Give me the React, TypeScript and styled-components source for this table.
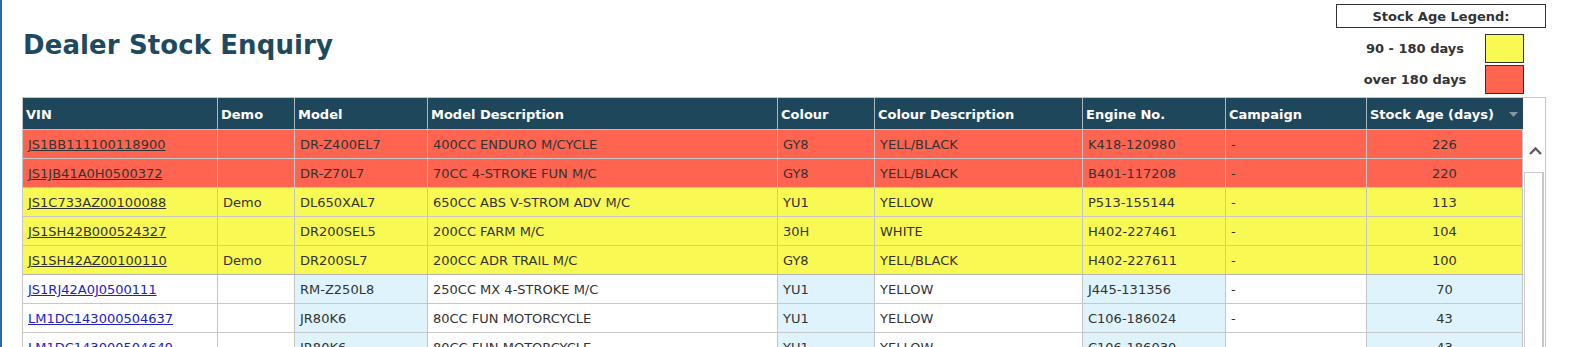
import React from "react";
import styled, { createGlobalStyle, css } from "styled-components";

const GlobalStyle = createGlobalStyle`
  html, body {
    margin: 0;
    padding: 0;
    overflow: hidden;
    background: #ffffff;
  }
  body {
    font-family: "DejaVu Sans", Verdana, sans-serif;
    color: #333333;
  }
`;

type Tone = "red" | "yellow" | "none";

interface StockRow {
  vin: string;
  demo: string;
  model: string;
  desc: string;
  colour: string;
  colourDesc: string;
  engine: string;
  campaign: string;
  age: number;
  tone: Tone;
}

const rows: StockRow[] = [
  { vin: "JS1BB111100118900", demo: "", model: "DR-Z400EL7", desc: "400CC ENDURO M/CYCLE", colour: "GY8", colourDesc: "YELL/BLACK", engine: "K418-120980", campaign: "-", age: 226, tone: "red" },
  { vin: "JS1JB41A0H0500372", demo: "", model: "DR-Z70L7", desc: "70CC 4-STROKE FUN M/C", colour: "GY8", colourDesc: "YELL/BLACK", engine: "B401-117208", campaign: "-", age: 220, tone: "red" },
  { vin: "JS1C733AZ00100088", demo: "Demo", model: "DL650XAL7", desc: "650CC ABS V-STROM ADV M/C", colour: "YU1", colourDesc: "YELLOW", engine: "P513-155144", campaign: "-", age: 113, tone: "yellow" },
  { vin: "JS1SH42B000524327", demo: "", model: "DR200SEL5", desc: "200CC FARM M/C", colour: "30H", colourDesc: "WHITE", engine: "H402-227461", campaign: "-", age: 104, tone: "yellow" },
  { vin: "JS1SH42AZ00100110", demo: "Demo", model: "DR200SL7", desc: "200CC ADR TRAIL M/C", colour: "GY8", colourDesc: "YELL/BLACK", engine: "H402-227611", campaign: "-", age: 100, tone: "yellow" },
  { vin: "JS1RJ42A0J0500111", demo: "", model: "RM-Z250L8", desc: "250CC MX 4-STROKE M/C", colour: "YU1", colourDesc: "YELLOW", engine: "J445-131356", campaign: "-", age: 70, tone: "none" },
  { vin: "LM1DC143000504637", demo: "", model: "JR80K6", desc: "80CC FUN MOTORCYCLE", colour: "YU1", colourDesc: "YELLOW", engine: "C106-186024", campaign: "-", age: 43, tone: "none" },
  { vin: "LM1DC143000504649", demo: "", model: "JR80K6", desc: "80CC FUN MOTORCYCLE", colour: "YU1", colourDesc: "YELLOW", engine: "C106-186030", campaign: "-", age: 43, tone: "none" },
];

const RED = "#ff6450";
const YELLOW = "#f9f954";
const SHADE = "#dff3fd";
const HEAD = "#1f475b";

const COLUMNS = "195px 77px 133px 350px 97px 208px 143px 141px 156px";

const Page = styled.div`
  box-sizing: border-box;
  width: 1583px;
  min-height: 100vh;
  border-left: 2px solid #2f6ca3;
  padding: 4px 0 0 20px;
`;

const TopBar = styled.div`
  display: flex;
  justify-content: space-between;
  align-items: flex-start;
  width: 1524px;
`;

const Title = styled.h1`
  margin: 28px 0 0 1px;
  font-size: 26px;
  line-height: 26px;
  font-weight: bold;
  color: #1e4a60;
  letter-spacing: 0.1px;
`;

const Legend = styled.div`
  display: flex;
  flex-direction: column;
  width: 210px;
`;

const LegendTitle = styled.div`
  box-sizing: border-box;
  height: 24px;
  border: 1px solid #333333;
  font-size: 13px;
  font-weight: bold;
  color: #333333;
  display: flex;
  align-items: center;
  justify-content: center;
  margin-bottom: 6px;
`;

const LegendRow = styled.div`
  display: flex;
  align-items: center;
  padding-left: 9px;
  margin-bottom: 2px;
`;

const LegendLabel = styled.span`
  width: 140px;
  text-align: center;
  font-size: 13px;
  font-weight: bold;
  color: #333333;
`;

const Swatch = styled.span<{ $color: string }>`
  box-sizing: border-box;
  width: 39px;
  height: 29px;
  border: 1px solid #333333;
  background: ${(p) => p.$color};
`;

const Frame = styled.div`
  box-sizing: border-box;
  width: 1524px;
  margin-top: 1px;
  border: 1px solid #c6c6c6;
  display: flex;
  flex-direction: column;
`;

const HeadLine = styled.div`
  display: flex;
`;

const GridRow = styled.div`
  display: grid;
  grid-template-columns: ${COLUMNS};
  width: 1500px;
`;

const HeaderRow = styled(GridRow)`
  box-sizing: border-box;
  height: 32px;
  background: ${HEAD};
  border-bottom: 1px solid #b9c3c9;
`;

const HeaderCell = styled.div<{ $last?: boolean }>`
  box-sizing: border-box;
  display: flex;
  align-items: center;
  justify-content: space-between;
  padding: 1px 5px 0 3px;
  font-size: 13px;
  font-weight: bold;
  color: #ffffff;
  white-space: nowrap;
  border-right: ${(p) => (p.$last ? "none" : "1px solid #a9b7c0")};
`;

const SortArrow = styled.svg`
  width: 9px;
  height: 5px;
  flex: none;
  margin-top: 1px;
`;

const HeadFiller = styled.div`
  flex: 1;
  background: #ffffff;
`;

const BodyLine = styled.div`
  display: flex;
  align-items: flex-start;
`;

const Rows = styled.div`
  display: flex;
  flex-direction: column;
  width: 1500px;
`;

const toneBg = (tone: Tone) =>
  tone === "red" ? RED : tone === "yellow" ? YELLOW : "#ffffff";

const BodyRow = styled(GridRow)<{ $tone: Tone; $split?: boolean }>`
  box-sizing: border-box;
  height: 29px;
  background: ${(p) => toneBg(p.$tone)};
  border-bottom: 1px solid ${(p) => (p.$split ? "#b4b4b4" : "#c8c8c8")};
`;

const Cell = styled.div<{ $shade?: boolean; $center?: boolean; $plain?: boolean }>`
  box-sizing: border-box;
  display: flex;
  align-items: center;
  justify-content: ${(p) => (p.$center ? "center" : "flex-start")};
  padding: 1px 5px 0;
  font-size: 13px;
  color: #333333;
  white-space: nowrap;
  overflow: hidden;
  border-right: 1px solid #c4c4c4;
  ${(p) =>
    p.$shade &&
    p.$plain &&
    css`
      background: ${SHADE};
    `}
`;

const VinLink = styled.a<{ $plain: boolean }>`
  color: ${(p) => (p.$plain ? "#2121c4" : "#333333")};
  text-decoration: underline;
  cursor: pointer;
`;

const Scrollbar = styled.div`
  width: 22px;
  display: flex;
  flex-direction: column;
  align-self: stretch;
`;

const ScrollUp = styled.div`
  height: 42px;
  display: flex;
  align-items: center;
  justify-content: center;
  padding-left: 2px;
`;

const ScrollThumb = styled.div`
  box-sizing: border-box;
  flex: 1;
  margin: 0 1px 0 1px;
  border: 1px solid #cdcdcd;
  border-bottom: none;
  border-right: 2px solid #c8c8c8;
  background: #ffffff;
`;

export default function App() {
  return (
    <>
      <GlobalStyle />
      <Page>
        <TopBar>
          <Title>Dealer Stock Enquiry</Title>
          <Legend>
            <LegendTitle>Stock Age Legend:</LegendTitle>
            <LegendRow>
              <LegendLabel>90 - 180 days</LegendLabel>
              <Swatch $color={YELLOW} />
            </LegendRow>
            <LegendRow>
              <LegendLabel>over 180 days</LegendLabel>
              <Swatch $color={RED} />
            </LegendRow>
          </Legend>
        </TopBar>
        <Frame>
          <HeadLine>
            <HeaderRow>
              <HeaderCell>VIN</HeaderCell>
              <HeaderCell>Demo</HeaderCell>
              <HeaderCell>Model</HeaderCell>
              <HeaderCell>Model Description</HeaderCell>
              <HeaderCell>Colour</HeaderCell>
              <HeaderCell>Colour Description</HeaderCell>
              <HeaderCell>Engine No.</HeaderCell>
              <HeaderCell>Campaign</HeaderCell>
              <HeaderCell $last>
                Stock Age (days)
                <SortArrow viewBox="0 0 9 5">
                  <polygon points="0,0 9,0 4.5,5" fill="#8796a0" />
                </SortArrow>
              </HeaderCell>
            </HeaderRow>
            <HeadFiller />
          </HeadLine>
          <BodyLine>
            <Rows>
              {rows.map((r, i) => {
                const plain = r.tone === "none";
                const split = r.tone !== "none" && rows[i + 1]?.tone === "none";
                return (
                  <BodyRow key={r.vin} $tone={r.tone} $split={split}>
                    <Cell>
                      <VinLink $plain={plain}>{r.vin}</VinLink>
                    </Cell>
                    <Cell>{r.demo}</Cell>
                    <Cell $shade $plain={plain}>{r.model}</Cell>
                    <Cell>{r.desc}</Cell>
                    <Cell $shade $plain={plain}>{r.colour}</Cell>
                    <Cell>{r.colourDesc}</Cell>
                    <Cell $shade $plain={plain}>{r.engine}</Cell>
                    <Cell>{r.campaign}</Cell>
                    <Cell $shade $plain={plain} $center>{r.age}</Cell>
                  </BodyRow>
                );
              })}
            </Rows>
            <Scrollbar>
              <ScrollUp>
                <svg width="13" height="8" viewBox="0 0 13 8">
                  <polyline
                    points="1,7 6.5,1.5 12,7"
                    fill="none"
                    stroke="#5c5c5c"
                    strokeWidth="2.4"
                  />
                </svg>
              </ScrollUp>
              <ScrollThumb />
            </Scrollbar>
          </BodyLine>
        </Frame>
      </Page>
    </>
  );
}
